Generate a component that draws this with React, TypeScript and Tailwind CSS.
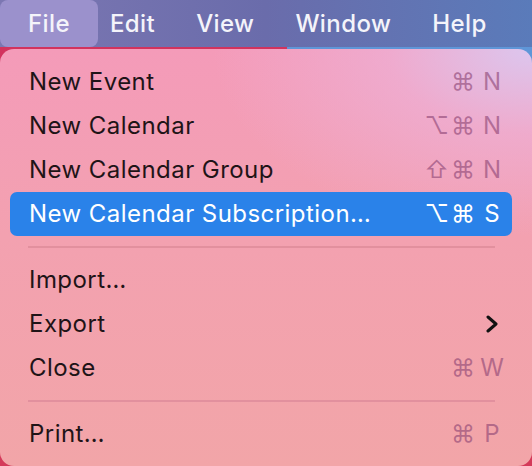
import React from "react";

type Item =
  | { type: "item"; label: string; mods?: string; keyChar?: string; submenu?: boolean; active?: boolean }
  | { type: "sep" };

const items: Item[] = [
  { type: "item", label: "New Event", mods: "⌘", keyChar: "N" },
  { type: "item", label: "New Calendar", mods: "⌥⌘", keyChar: "N" },
  { type: "item", label: "New Calendar Group", mods: "⇧⌘", keyChar: "N" },
  { type: "item", label: "New Calendar Subscription…", mods: "⌥⌘", keyChar: "S", active: true },
  { type: "sep" },
  { type: "item", label: "Import…" },
  { type: "item", label: "Export", submenu: true },
  { type: "item", label: "Close", mods: "⌘", keyChar: "W" },
  { type: "sep" },
  { type: "item", label: "Print…", mods: "⌘", keyChar: "P" },
];

const bar = ["Edit", "View", "Window", "Help"];

export default function App() {
  return (
    <div
      className="w-[532px] h-[466px] overflow-hidden flex flex-col bg-[#d43a5a]"
      style={{ fontFamily: "Inter, 'DejaVu Sans', sans-serif" }}
    >
      <div className="h-[47px] shrink-0 flex items-stretch bg-[linear-gradient(to_right,#7c77b2,#6a6cab_50%,#5a7bba)] text-[24px] font-medium tracking-[0.4px] text-[#f4f4fa]">
        <div className="w-[98px] rounded-[8px] bg-[#9b91cc] flex items-center justify-center">File</div>
        <div className="flex items-center gap-[41px] ml-[12px]">
          {bar.map((b) => (
            <span key={b}>{b}</span>
          ))}
        </div>
      </div>
      <div className="flex-1 flex flex-col bg-[linear-gradient(to_right,#d2335e_54%,#5f96d8_54%)] bg-[length:100%_16px] bg-no-repeat pt-[2px]">
        <div className="flex-1 rounded-[14px] pt-[11px] pl-[10px] pr-[20px] bg-[radial-gradient(ellipse_60%_45%_at_100%_0%,#dcc6ee_0%,rgba(236,180,220,0.6)_45%,transparent_100%),linear-gradient(to_bottom,#f49bb9,#f3a1b0_45%,#f2a5a8)] text-[24px] text-[#1f1417]">
          {items.map((it, i) =>
            it.type === "sep" ? (
              <div key={i} className="h-[22px] flex items-center ml-[18px] mr-[17px]">
                <div className="h-[2px] w-full bg-[#e2909e]" />
              </div>
            ) : (
              <div
                key={i}
                className={
                  "h-[44px] flex items-center pl-[19px] pr-[8px] rounded-[7px] " +
                  (it.active ? "bg-[#2a82e9] text-white" : "")
                }
              >
                <span className="flex-1 tracking-[0.45px]">{it.label}</span>
                {it.mods && (
                  <span className={"flex items-center " + (it.active ? "text-white" : "text-[#8a4272]/60")}>
                    <span className="text-right tracking-[2px]">{it.mods}</span>
                    <span className="w-[24px] ml-[3px] text-center">{it.keyChar}</span>
                  </span>
                )}
                {it.submenu && (
                  <span className="w-[24px] ml-[3px] flex justify-center">
                    <svg width="14" height="18" viewBox="0 0 14 18">
                      <polyline points="3,2 11,9 3,16" fill="none" stroke="#111" strokeWidth="3" strokeLinecap="round" strokeLinejoin="round" />
                    </svg>
                  </span>
                )}
              </div>
            )
          )}
        </div>
      </div>
    </div>
  );
}
